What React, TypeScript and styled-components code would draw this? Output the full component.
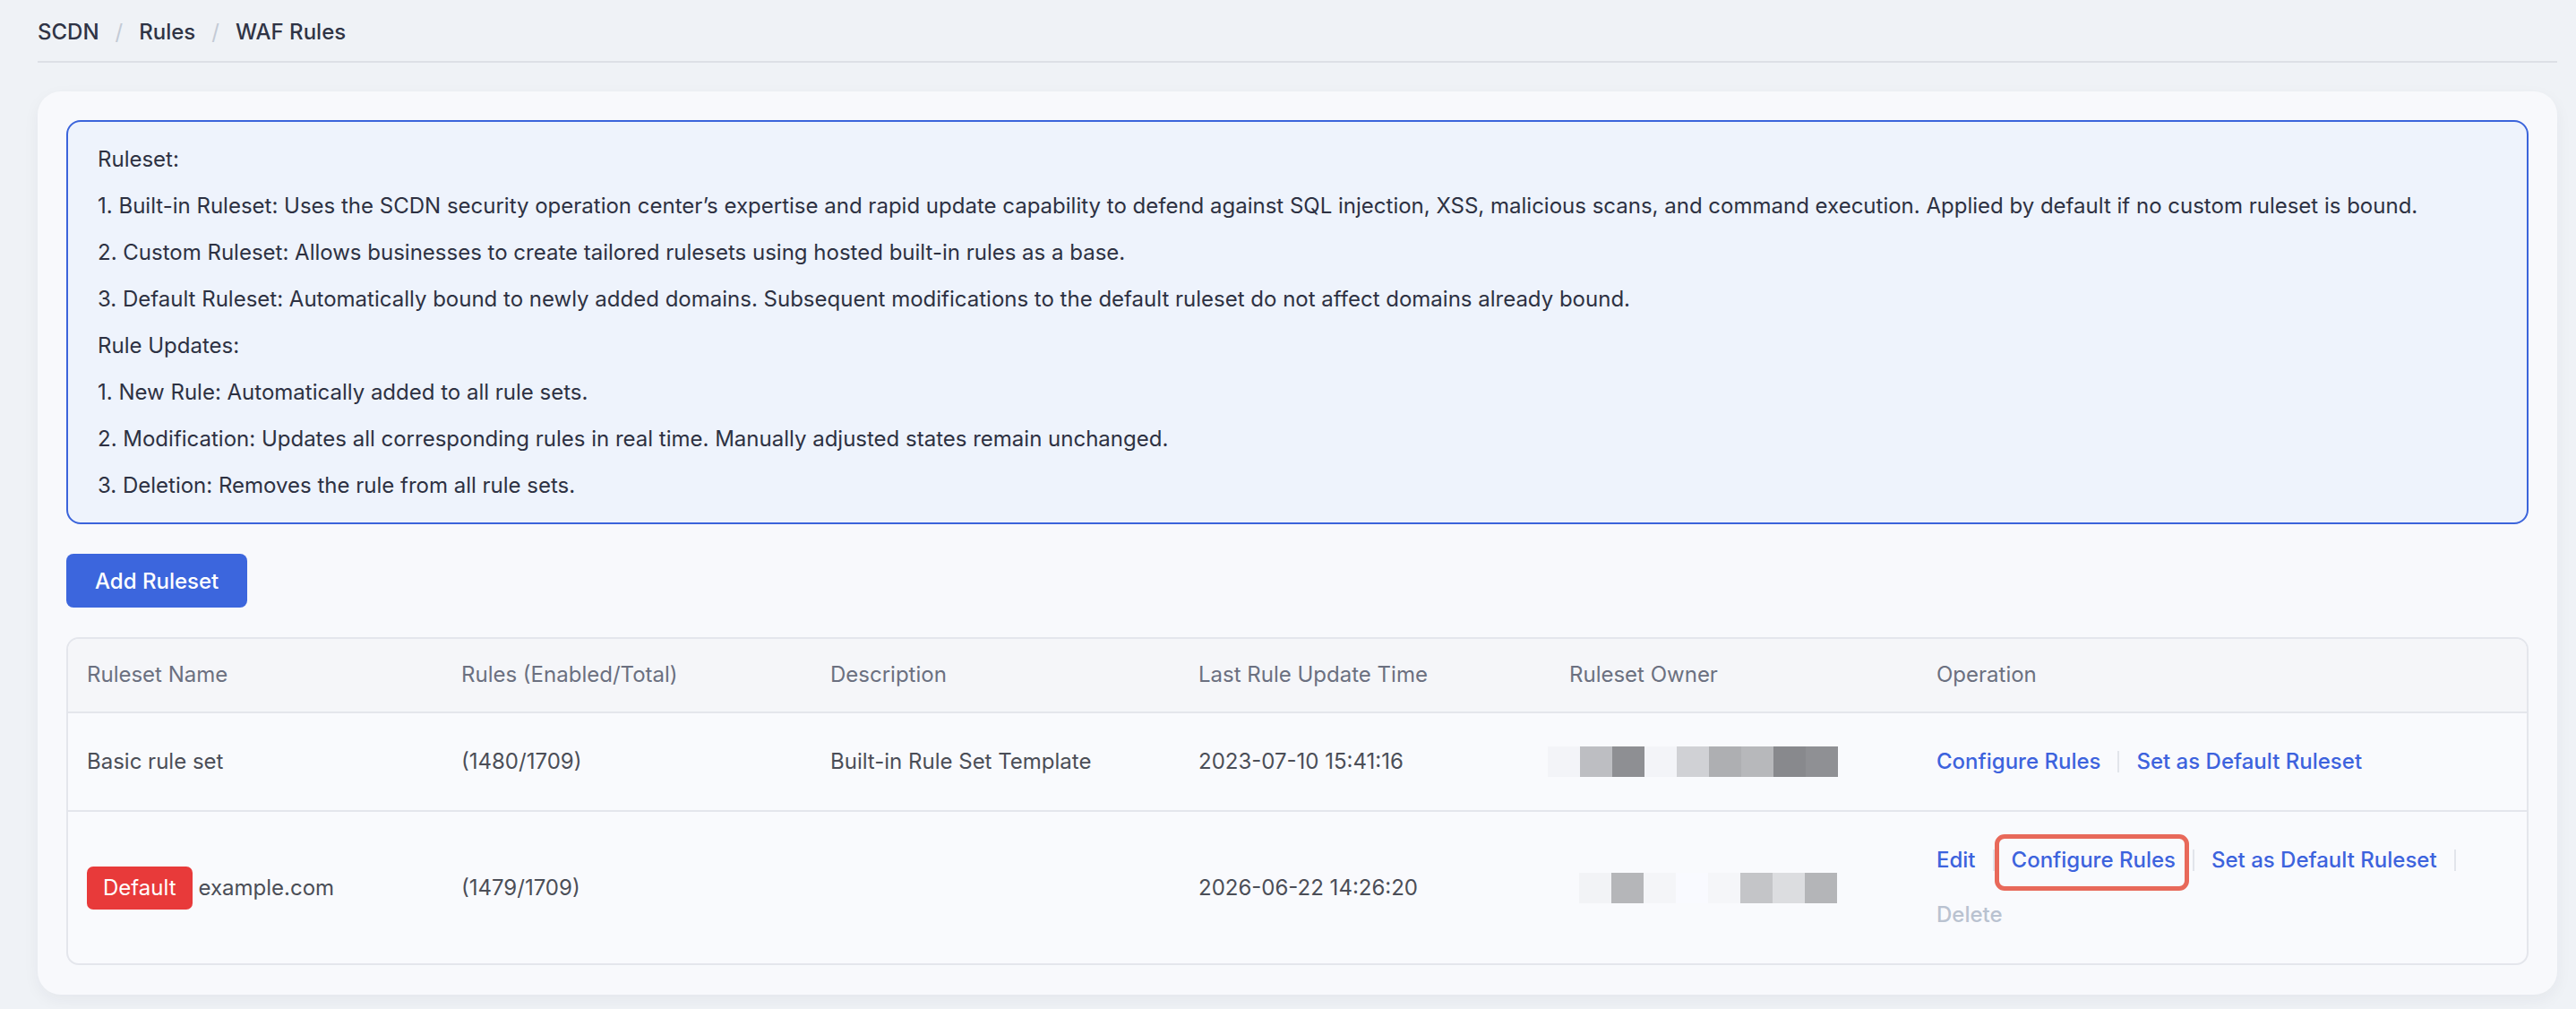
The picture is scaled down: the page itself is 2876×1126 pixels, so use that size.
import styled, { createGlobalStyle } from 'styled-components';

const GlobalStyle = createGlobalStyle`
  html, body {
    margin: 0;
    padding: 0;
    background: #eff2f6;
  }
  body {
    font-family: Inter, 'Noto Sans', 'Liberation Sans', sans-serif;
    font-size: 24px;
    line-height: 36px;
    color: #2d3142;
  }
  * {
    box-sizing: border-box;
  }
`;

const Page = styled.div`
  padding: 18px 21px 40px 42px;
`;

const Breadcrumb = styled.nav`
  display: flex;
  align-items: center;
  padding-bottom: 14px;
  border-bottom: 2px solid #dde0e6;
  font-weight: 500;
  color: #2f3445;
`;

const Crumb = styled.span`
  white-space: nowrap;
`;

const Slash = styled.span`
  margin: 0 18px;
  color: #c3cad5;
  font-weight: 400;
`;

const Card = styled.section`
  margin-top: 32px;
  padding: 32px 32px 33px 32px;
  background: #f8f9fc;
  border-radius: 26px;
  box-shadow: 0 6px 18px rgba(30, 40, 60, 0.05);
  display: flex;
  flex-direction: column;
  align-items: flex-start;
  gap: 33px;
`;

const Notice = styled.div`
  align-self: stretch;
  border: 2px solid #3b64db;
  border-radius: 16px;
  background: #eef3fc;
  padding: 24px 32px 23px 33px;
  display: flex;
  flex-direction: column;
  gap: 16px;
`;

const NoticeLine = styled.p`
  margin: 0;
  color: #2d3142;
`;

const PrimaryButton = styled.button`
  height: 60px;
  padding: 0 32px;
  border: none;
  border-radius: 8px;
  background: #3c66dd;
  color: #ffffff;
  font-family: inherit;
  font-size: 24px;
  font-weight: 500;
  cursor: pointer;
`;

const TableWrap = styled.div`
  align-self: stretch;
  border: 2px solid #e4e6ec;
  border-radius: 14px;
  overflow: hidden;
  background: #f9fafd;
`;

const Table = styled.table`
  width: 100%;
  border-collapse: collapse;
  table-layout: fixed;
`;

const Col = styled.col<{ $w?: number }>`
  width: ${(p) => (p.$w ? `${p.$w}px` : 'auto')};
`;

const Th = styled.th`
  text-align: left;
  font-weight: 400;
  color: #6b7080;
  background: #f5f6f9;
  padding: 22px 21px 23px;
  border-bottom: 2px solid #e4e6ec;
  white-space: nowrap;
`;

const Tr = styled.tr<{ $last?: boolean }>`
  & > td {
    border-bottom: ${(p) => (p.$last ? 'none' : '2px solid #e4e6ec')};
  }
`;

const Td = styled.td`
  padding: 36px 21px 36px;
  color: #4b4e57;
  vertical-align: middle;
  white-space: nowrap;
`;

const NameCell = styled.div`
  display: flex;
  align-items: center;
  gap: 7px;
`;

const Badge = styled.span`
  display: inline-block;
  padding: 6px 18px;
  border-radius: 7px;
  background: #e83a3a;
  color: #ffffff;
`;

const Mosaic = styled.div<{ $offset: number }>`
  display: flex;
  height: 34px;
  margin-left: ${(p) => p.$offset}px;
`;

const Pixel = styled.span<{ $c: string }>`
  width: 36px;
  height: 100%;
  background: ${(p) => p.$c};
`;

const Ops = styled.div`
  display: flex;
  flex-wrap: wrap;
  row-gap: 25px;
`;

const OpItem = styled.span`
  display: inline-flex;
  align-items: center;
`;

const OpLink = styled.a<{ $disabled?: boolean; $marked?: boolean }>`
  position: relative;
  color: ${(p) => (p.$disabled ? '#b9c2d0' : '#3d63dd')};
  font-weight: 500;
  text-decoration: none;
  cursor: ${(p) => (p.$disabled ? 'not-allowed' : 'pointer')};

  ${(p) =>
    p.$marked &&
    `
    &::after {
      content: '';
      position: absolute;
      left: -19px;
      right: -15px;
      top: -11px;
      bottom: -16px;
      border: 5px solid #e8695a;
      border-radius: 11px;
      pointer-events: none;
    }
  `}
`;

const OpDivider = styled.span`
  width: 2px;
  height: 24px;
  margin: 0 19px;
  background: #e2e5eb;
`;

type Op = { label: string; disabled?: boolean; marked?: boolean };

type Row = {
  name: string;
  isDefault?: boolean;
  rules: string;
  description: string;
  updated: string;
  owner: string[];
  ownerOffset: number;
  ops: Op[];
};

const rows: Row[] = [
  {
    name: 'Basic rule set',
    rules: '(1480/1709)',
    description: 'Built-in Rule Set Template',
    updated: '2023-07-10 15:41:16',
    owner: ['#f3f4f8', '#bdbec2', '#8e8f93', '#f3f4f8', '#d0d1d5', '#aeafb2', '#b7b8bb', '#88898d', '#8f9094'],
    ownerOffset: -24,
    ops: [{ label: 'Configure Rules' }, { label: 'Set as Default Ruleset' }],
  },
  {
    name: 'example.com',
    isDefault: true,
    rules: '(1479/1709)',
    description: '',
    updated: '2026-06-22 14:26:20',
    owner: ['#f2f3f6', '#b5b6b9', '#f4f5f8', '#f9faff', '#f5f6f9', '#c4c5c8', '#dcdde0', '#b4b5b8'],
    ownerOffset: 11,
    ops: [
      { label: 'Edit' },
      { label: 'Configure Rules', marked: true },
      { label: 'Set as Default Ruleset' },
      { label: 'Delete', disabled: true },
    ],
  },
];

const notes = [
  'Ruleset:',
  '1. Built-in Ruleset: Uses the SCDN security operation center’s expertise and rapid update capability to defend against SQL injection, XSS, malicious scans, and command execution. Applied by default if no custom ruleset is bound.',
  '2. Custom Ruleset: Allows businesses to create tailored rulesets using hosted built-in rules as a base.',
  '3. Default Ruleset: Automatically bound to newly added domains. Subsequent modifications to the default ruleset do not affect domains already bound.',
  'Rule Updates:',
  '1. New Rule: Automatically added to all rule sets.',
  '2. Modification: Updates all corresponding rules in real time. Manually adjusted states remain unchanged.',
  '3. Deletion: Removes the rule from all rule sets.',
];

function App(): JSX.Element {
  return (
    <>
      <GlobalStyle />
      <Page>
        <Breadcrumb>
          <Crumb>SCDN</Crumb>
          <Slash>/</Slash>
          <Crumb>Rules</Crumb>
          <Slash>/</Slash>
          <Crumb>WAF Rules</Crumb>
        </Breadcrumb>

        <Card>
          <Notice>
            {notes.map((line) => (
              <NoticeLine key={line}>{line}</NoticeLine>
            ))}
          </Notice>

          <PrimaryButton>Add Ruleset</PrimaryButton>

          <TableWrap>
            <Table>
              <colgroup>
                <Col $w={418} />
                <Col $w={412} />
                <Col $w={411} />
                <Col $w={414} />
                <Col $w={410} />
                <Col />
              </colgroup>
              <thead>
                <tr>
                  <Th>Ruleset Name</Th>
                  <Th>Rules (Enabled/Total)</Th>
                  <Th>Description</Th>
                  <Th>Last Rule Update Time</Th>
                  <Th>Ruleset Owner</Th>
                  <Th>Operation</Th>
                </tr>
              </thead>
              <tbody>
                {rows.map((row, i) => (
                  <Tr key={row.name} $last={i === rows.length - 1}>
                    <Td>
                      <NameCell>
                        {row.isDefault && <Badge>Default</Badge>}
                        <span>{row.name}</span>
                      </NameCell>
                    </Td>
                    <Td>{row.rules}</Td>
                    <Td>{row.description}</Td>
                    <Td>{row.updated}</Td>
                    <Td>
                      <Mosaic $offset={row.ownerOffset}>
                        {row.owner.map((c, k) => (
                          <Pixel key={k} $c={c} />
                        ))}
                      </Mosaic>
                    </Td>
                    <Td>
                      <Ops>
                        {row.ops.map((op, k) => (
                          <OpItem key={op.label}>
                            <OpLink $disabled={op.disabled} $marked={op.marked}>
                              {op.label}
                            </OpLink>
                            {k < row.ops.length - 1 && <OpDivider />}
                          </OpItem>
                        ))}
                      </Ops>
                    </Td>
                  </Tr>
                ))}
              </tbody>
            </Table>
          </TableWrap>
        </Card>
      </Page>
    </>
  );
}

export default App;
